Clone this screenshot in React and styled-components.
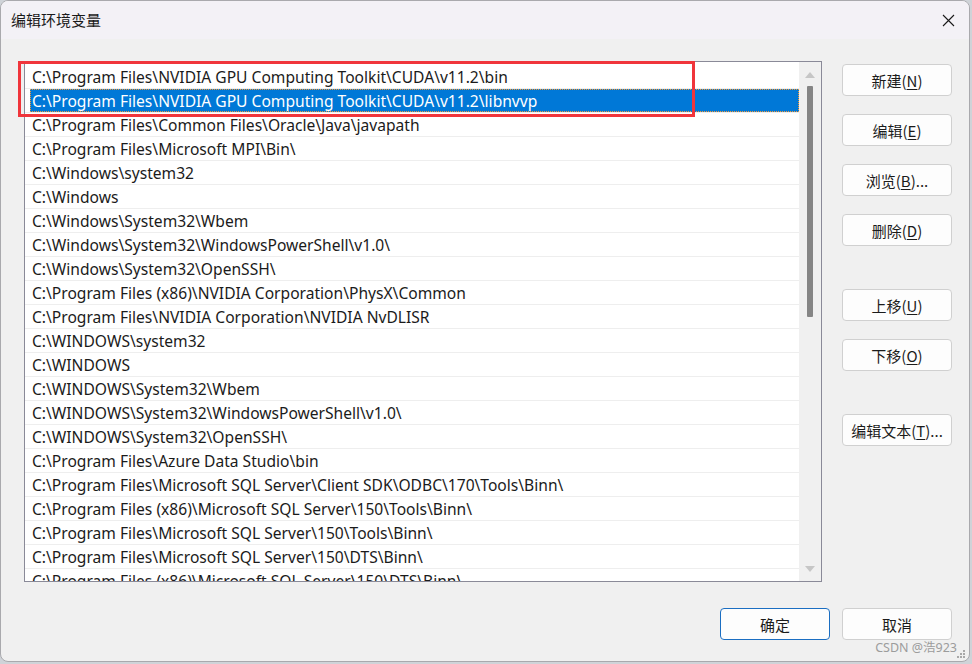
import React from "react";
import styled, { createGlobalStyle } from "styled-components";

const paths = [
  "C:\\Program Files\\NVIDIA GPU Computing Toolkit\\CUDA\\v11.2\\bin",
  "C:\\Program Files\\NVIDIA GPU Computing Toolkit\\CUDA\\v11.2\\libnvvp",
  "C:\\Program Files\\Common Files\\Oracle\\Java\\javapath",
  "C:\\Program Files\\Microsoft MPI\\Bin\\",
  "C:\\Windows\\system32",
  "C:\\Windows",
  "C:\\Windows\\System32\\Wbem",
  "C:\\Windows\\System32\\WindowsPowerShell\\v1.0\\",
  "C:\\Windows\\System32\\OpenSSH\\",
  "C:\\Program Files (x86)\\NVIDIA Corporation\\PhysX\\Common",
  "C:\\Program Files\\NVIDIA Corporation\\NVIDIA NvDLISR",
  "C:\\WINDOWS\\system32",
  "C:\\WINDOWS",
  "C:\\WINDOWS\\System32\\Wbem",
  "C:\\WINDOWS\\System32\\WindowsPowerShell\\v1.0\\",
  "C:\\WINDOWS\\System32\\OpenSSH\\",
  "C:\\Program Files\\Azure Data Studio\\bin",
  "C:\\Program Files\\Microsoft SQL Server\\Client SDK\\ODBC\\170\\Tools\\Binn\\",
  "C:\\Program Files (x86)\\Microsoft SQL Server\\150\\Tools\\Binn\\",
  "C:\\Program Files\\Microsoft SQL Server\\150\\Tools\\Binn\\",
  "C:\\Program Files\\Microsoft SQL Server\\150\\DTS\\Binn\\",
  "C:\\Program Files (x86)\\Microsoft SQL Server\\150\\DTS\\Binn\\",
];

const sideButtons = [
  { label: "新建", key: "N", gap: 0 },
  { label: "编辑", key: "E", gap: 18 },
  { label: "浏览", key: "B", tail: "...", gap: 18 },
  { label: "删除", key: "D", gap: 18 },
  { label: "上移", key: "U", gap: 43 },
  { label: "下移", key: "O", gap: 18 },
  { label: "编辑文本", key: "T", tail: "...", gap: 43 },
];

const GlobalStyle = createGlobalStyle`
  html, body {
    margin: 0;
    padding: 0;
    background: #cfd3d8;
  }
  body {
    font-family: "Noto Sans", "Noto Sans CJK SC", sans-serif;
    color: #1b1b1b;
  }
`;

const Window = styled.div`
  position: relative;
  width: 968px;
  height: 660px;
  border: 1px solid #a9a9ad;
  border-radius: 8px;
  overflow: hidden;
  background: #f0f0f0;
  display: flex;
  flex-direction: column;
`;

const TitleBar = styled.div`
  height: 38px;
  display: flex;
  align-items: center;
  justify-content: space-between;
  padding: 0 14px 0 10px;
  background: #f3f1f6;
  flex-shrink: 0;
`;

const Title = styled.span`
  font-size: 15px;
  font-family: "Noto Sans CJK SC", sans-serif;
  color: #1a1a1a;
  margin-top: -2px;
`;

const Body = styled.div`
  display: flex;
  padding: 22px 17px 0 23px;
  gap: 20px;
`;

const ListBox = styled.div`
  position: relative;
  width: 797px;
  height: 519px;
  border: 1px solid #8a8a98;
  background: #fff;
  display: flex;
  overflow: hidden;
`;

const Rows = styled.div`
  flex: 1;
  padding-top: 3px;
`;

const Row = styled.div`
  height: 23px;
  border-bottom: 1px solid #eeeeee;
  display: flex;
`;

const Label = styled.div`
  flex: 1;
  margin-left: 5px;
  padding-left: 2px;
  line-height: 24px;
  font-size: 15.6px;
  white-space: nowrap;
  box-sizing: border-box;
  background: ${(p) => (p.$selected ? "#0078d7" : "transparent")};
  color: ${(p) => (p.$selected ? "#fff" : "#1b1b1b")};
  outline: ${(p) => (p.$selected ? "1px dotted #f29a3a" : "none")};
  outline-offset: -1px;
`;

const ScrollBar = styled.div`
  width: 21px;
  background: #f0f0f0;
  display: flex;
  flex-direction: column;
  align-items: center;
  padding-top: 10px;
  padding-right: 1px;
`;

const Arrow = styled.div`
  width: 0;
  height: 0;
  border-left: 5px solid transparent;
  border-right: 5px solid transparent;
  ${(p) =>
    p.$down
      ? "border-top: 6px solid #c6c6c6; margin-top: auto; margin-bottom: 9px;"
      : "border-bottom: 6px solid #c6c6c6;"}
`;

const Thumb = styled.div`
  width: 6px;
  height: 231px;
  margin-top: 8px;
  background: #858585;
  border-radius: 1px;
`;

const SideColumn = styled.div`
  display: flex;
  flex-direction: column;
  padding-top: 3px;
`;

const Button = styled.button`
  width: 110px;
  height: 32px;
  margin-top: ${(p) => p.$gap || 0}px;
  border: 1px solid ${(p) => (p.$primary ? "#1b6ec2" : "#d0d0d0")};
  border-radius: 4px;
  background: #fdfdfd;
  font-family: "Noto Sans CJK SC", sans-serif;
  font-size: 15px;
  color: #1b1b1b;
  padding: 0;
  display: flex;
  align-items: center;
  justify-content: center;
  u {
    text-underline-offset: 2px;
  }
`;

const Footer = styled.div`
  display: flex;
  justify-content: flex-end;
  gap: 12px;
  padding: 26px 17px 0 0;
`;

const Highlight = styled.div`
  position: absolute;
  left: 17px;
  top: 60px;
  width: 671px;
  height: 50px;
  border: 3px solid #f0353b;
  pointer-events: none;
`;

const Watermark = styled.span`
  position: absolute;
  right: 12px;
  bottom: 5px;
  font-size: 12.5px;
  color: #9c9c9c;
  font-family: "Noto Sans", "Noto Sans CJK SC", sans-serif;
`;

const Grip = styled.svg`
  position: absolute;
  right: 3px;
  bottom: 2px;
`;

const CloseIcon = () => (
  <svg width="13" height="13" viewBox="0 0 13 13">
    <path d="M1 1 L12 12 M12 1 L1 12" stroke="#1a1a1a" strokeWidth="1.1" fill="none" />
  </svg>
);

const ButtonText = ({ label, k, tail }) => (
  <span>
    {label}(<u>{k}</u>){tail}
  </span>
);

export default function App() {
  return (
    <>
      <GlobalStyle />
      <Window>
        <TitleBar>
          <Title>编辑环境变量</Title>
          <CloseIcon />
        </TitleBar>
        <Body>
          <ListBox>
            <Rows>
              {paths.map((p, i) => (
                <Row key={i}>
                  <Label $selected={i === 1}>{p}</Label>
                </Row>
              ))}
            </Rows>
            <ScrollBar>
              <Arrow />
              <Thumb />
              <Arrow $down />
            </ScrollBar>
          </ListBox>
          <SideColumn>
            {sideButtons.map((b) => (
              <Button key={b.key} $gap={b.gap}>
                <ButtonText label={b.label} k={b.key} tail={b.tail} />
              </Button>
            ))}
          </SideColumn>
        </Body>
        <Footer>
          <Button $primary>确定</Button>
          <Button>取消</Button>
        </Footer>
        <Highlight />
        <Watermark>CSDN @浩923</Watermark>
        <Grip width="10" height="10" viewBox="0 0 10 10">
          <g fill="#a8a8a8">
            <rect x="7" y="1" width="2" height="2" />
            <rect x="4" y="4" width="2" height="2" />
            <rect x="7" y="4" width="2" height="2" />
            <rect x="1" y="7" width="2" height="2" />
            <rect x="4" y="7" width="2" height="2" />
            <rect x="7" y="7" width="2" height="2" />
          </g>
        </Grip>
      </Window>
    </>
  );
}
